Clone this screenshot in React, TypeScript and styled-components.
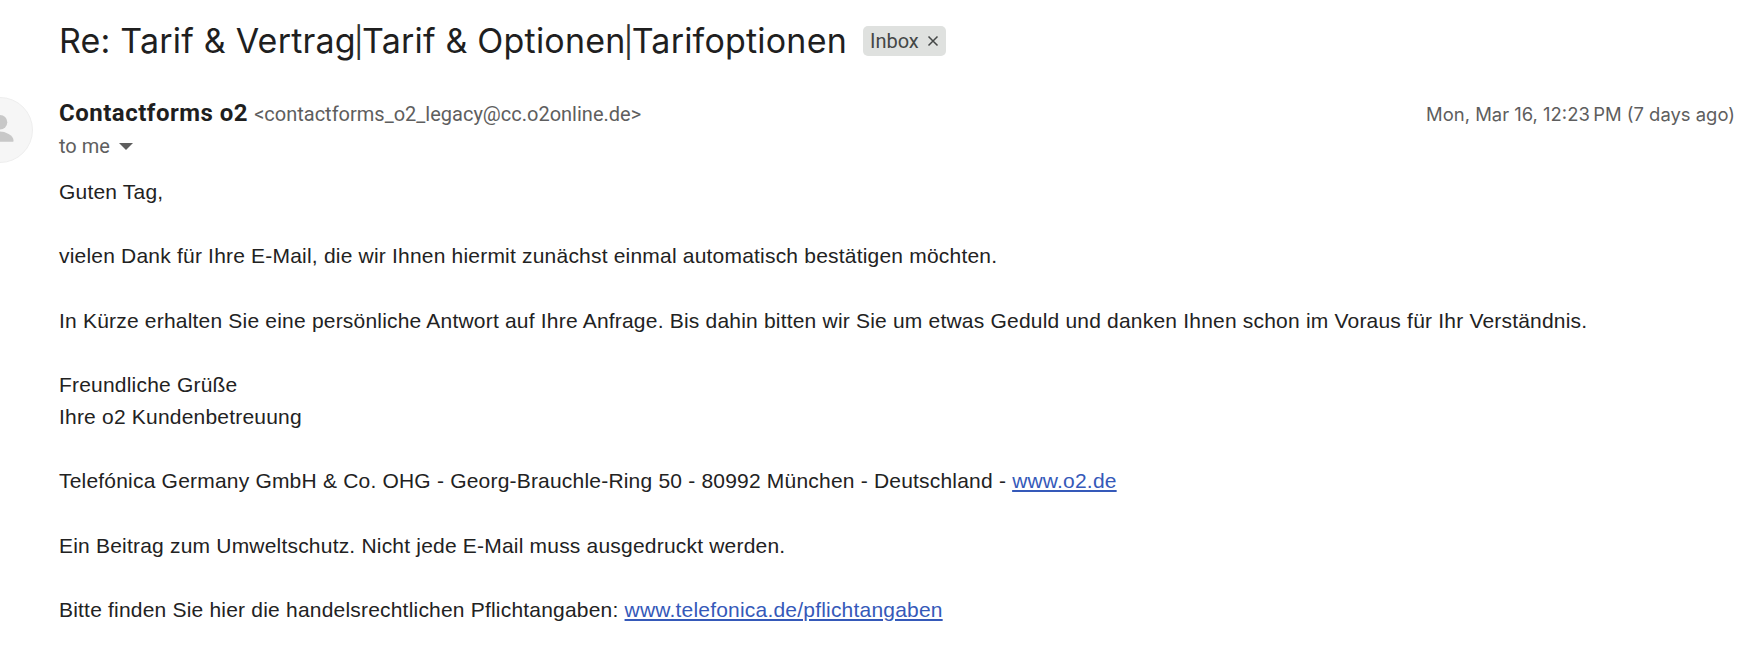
import styled, { createGlobalStyle } from "styled-components";

const GlobalStyle = createGlobalStyle`
  html, body {
    margin: 0;
    padding: 0;
    background: #fff;
    overflow: hidden;
  }
`;

const Page = styled.div`
  width: 1744px;
  height: 646px;
  overflow: hidden;
  padding-left: 59px;
  box-sizing: border-box;
`;

const SubjectRow = styled.div`
  display: flex;
  align-items: center;
  height: 82px;
  gap: 16px;
`;

const Subject = styled.h1`
  margin: 0;
  font: 400 34px/48px Inter, "Open Sans", sans-serif;
  letter-spacing: 0.2px;
  color: #1f1f1f;
  white-space: nowrap;
`;

const Pipe = styled.span`
  font-size: 30px;
  margin: 0 -2px;
  color: #333;
`;

const Label = styled.span`
  display: inline-flex;
  align-items: center;
  gap: 8px;
  height: 30px;
  padding: 0 7px;
  border-radius: 5px;
  background: #dfe1df;
  color: #444746;
  font: 400 20px/30px Roboto, sans-serif;
`;

const Header = styled.div`
  display: flex;
  position: relative;
  height: 94px;
`;

const Avatar = styled.div`
  position: absolute;
  left: -92px;
  top: 15px;
  width: 66px;
  height: 66px;
  box-sizing: border-box;
  border: 1px solid #eeeeee;
  border-radius: 50%;
  background: #f6f6f6;
  display: flex;
  align-items: center;
  justify-content: center;
`;

const Meta = styled.div`
  flex: 1;
  padding-top: 14px;
`;

const SenderRow = styled.div`
  display: flex;
  justify-content: space-between;
  align-items: baseline;
  height: 34px;
  padding-right: 9px;
`;

const Sender = styled.div`
  font: 400 20px/34px Roboto, sans-serif;
  color: #5e5e5e;
  white-space: nowrap;
`;

const SenderName = styled.span`
  font-weight: 700;
  font-size: 24px;
  letter-spacing: 0.5px;
  color: #1f1f1f;
  margin-right: 6px;
`;

const DateText = styled.div`
  font: 400 18.45px/34px Inter, sans-serif;
  color: #5e5e5e;
  white-space: nowrap;
`;

const ToRow = styled.div`
  display: flex;
  align-items: center;
  gap: 9px;
  height: 32px;
  font: 400 20px/32px Roboto, sans-serif;
  color: #5e5e5e;
`;

const Body = styled.div`
  font: 400 21px/32.15px "Liberation Sans", Arial, sans-serif;
  letter-spacing: 0.2px;
  color: #222;
  white-space: nowrap;
`;

const Line = styled.div`
  min-height: 32.15px;
`;

const Anchor = styled.a`
  color: #3559b9;
  text-decoration: underline;
`;

export default function App() {
  return (
    <Page>
      <GlobalStyle />
      <SubjectRow>
        <Subject>
          Re: Tarif &amp; Vertrag<Pipe>|</Pipe>Tarif &amp; Optionen<Pipe>|</Pipe>Tarifoptionen
        </Subject>
        <Label>
          Inbox
          <svg width="12" height="12" viewBox="0 0 12 12" fill="none" stroke="#444746" strokeWidth="1.5">
            <path d="M1.5 1.5l9 9M10.5 1.5l-9 9" />
          </svg>
        </Label>
      </SubjectRow>
      <Header>
        <Avatar>
          <svg width="66" height="66" viewBox="0 0 66 66" fill="#c8c8c8">
            <circle cx="33" cy="25" r="7.5" />
            <path d="M20 45c-.6 0-1-.4-1-1 0-6 9-9.500 14-9.500s14 3.500 14 9.500c0 .6-.4 1-1 1z" />
          </svg>
        </Avatar>
        <Meta>
          <SenderRow>
            <Sender>
              <SenderName>Contactforms o2</SenderName>
              &lt;contactforms_o2_legacy@cc.o2online.de&gt;
            </Sender>
            <DateText>Mon, Mar 16, 12:23{"\u202f"}PM (7 days ago)</DateText>
          </SenderRow>
          <ToRow>
            to me
            <svg width="14" height="7" viewBox="0 0 14 7" fill="#5e5e5e">
              <path d="M0 0h14L7 7z" />
            </svg>
          </ToRow>
        </Meta>
      </Header>
      <Body>
        <Line>Guten Tag,</Line>
        <Line />
        <Line>vielen Dank für Ihre E-Mail, die wir Ihnen hiermit zunächst einmal automatisch bestätigen möchten.</Line>
        <Line />
        <Line>In Kürze erhalten Sie eine persönliche Antwort auf Ihre Anfrage. Bis dahin bitten wir Sie um etwas Geduld und danken Ihnen schon im Voraus für Ihr Verständnis.</Line>
        <Line />
        <Line>Freundliche Grüße</Line>
        <Line>Ihre o2 Kundenbetreuung</Line>
        <Line />
        <Line>
          Telefónica Germany GmbH &amp; Co. OHG - Georg-Brauchle-Ring 50 - 80992 München - Deutschland - <Anchor href="#">www.o2.de</Anchor>
        </Line>
        <Line />
        <Line>Ein Beitrag zum Umweltschutz. Nicht jede E-Mail muss ausgedruckt werden.</Line>
        <Line />
        <Line>
          Bitte finden Sie hier die handelsrechtlichen Pflichtangaben: <Anchor href="#">www.telefonica.de/pflichtangaben</Anchor>
        </Line>
      </Body>
    </Page>
  );
}
